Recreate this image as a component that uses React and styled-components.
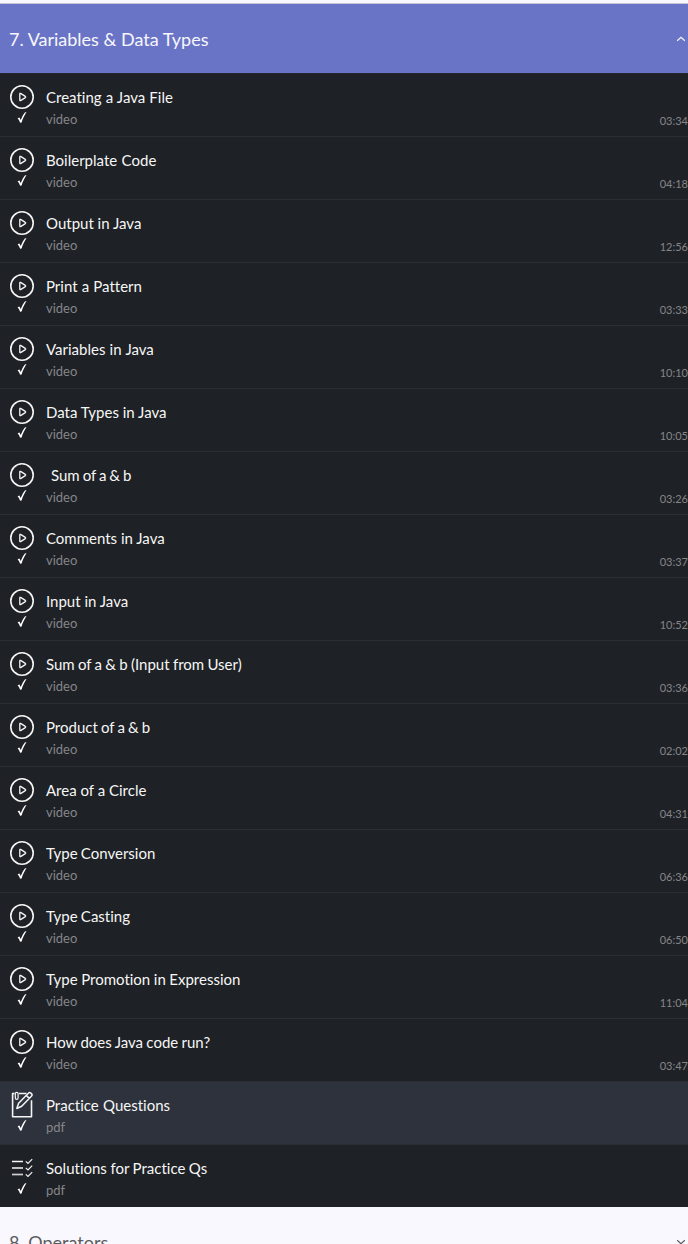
import React from "react";
import styled, { createGlobalStyle } from "styled-components";

const GlobalStyle = createGlobalStyle`
  body {
    margin: 0;
    background: #f9f8fe;
    font-family: Lato, "Open Sans", sans-serif;
    font-variant-ligatures: none;
    -webkit-font-smoothing: antialiased;
    overflow: hidden;
  }
`;

const Page = styled.main`
  box-sizing: border-box;
  height: 1244px;
  padding-top: 3px;
  overflow: hidden;
`;

const SectionHeader = styled.header`
  box-sizing: border-box;
  display: flex;
  align-items: center;
  justify-content: space-between;
  height: ${(p) => (p.$open ? 70 : 68)}px;
  padding: ${(p) => (p.$open ? 1 : 0)}px 2px 0 9px;
  border-top: 1px solid ${(p) => (p.$open ? "#c5c6d6" : "#f9f8fe")};
  background: ${(p) => (p.$open ? "#6a74c6" : "#f9f8fe")};
  color: ${(p) => (p.$open ? "#f7f7fc" : "#5c5c5e")};
`;

const SectionTitle = styled.h2`
  margin: 0;
  font-size: 18px;
  font-weight: 400;
  line-height: 24px;
  white-space: nowrap;
`;

const Chevron = styled.svg`
  display: block;
  flex: none;
  width: 10px;
  height: 6px;
  margin-bottom: ${(p) => (p.$open ? 1 : 0)}px;
  fill: none;
  stroke: currentColor;
  stroke-width: 1.2;
`;

const Lessons = styled.ul`
  margin: 0;
  padding: 0;
  list-style: none;
`;

const Lesson = styled.li`
  box-sizing: border-box;
  display: flex;
  height: 63px;
  border-top: 1px solid ${(p) => (p.$first ? "#25272f" : "#2c2e31")};
  background: ${(p) => (p.$active ? "#2e323c" : "#1e2125")};
`;

const Status = styled.div`
  display: flex;
  flex-direction: column;
  align-items: center;
  flex: none;
  width: 44px;
  padding-top: 8px;
  color: #fff;
`;

const Icon = styled.svg`
  display: block;
  width: 30px;
  height: 30px;
  fill: none;
  stroke: #f5f5f5;
`;

const Tick = styled.svg`
  display: block;
  width: 12px;
  height: 12px;
  fill: #fff;
`;

const Details = styled.div`
  flex: 1;
  padding: 12px 0 0 2px;
`;

const Name = styled.div`
  padding-left: ${(p) => (p.$indent ? 5 : 0)}px;
  color: #f6f6f6;
  font-size: 15px;
  line-height: 22px;
  white-space: nowrap;
  word-spacing: ${(p) => p.$wordSpacing || 0}px;
`;

const Kind = styled.div`
  color: #858689;
  font-size: 13px;
  line-height: 22px;
`;

const Duration = styled.time`
  align-self: flex-end;
  padding-bottom: 7px;
  color: #858689;
  font-size: 11px;
  line-height: 16px;
`;

const PlayIcon = () => (
  <Icon viewBox="0 0 30 30">
    <circle cx="15" cy="15" r="11.2" strokeWidth="1.6" />
    <path d="M12.8 11.9q0-.9.8-.5l4.7 3q.8.6 0 1.2l-4.7 3q-.8.4-.8-.5z" strokeWidth="1.3" />
  </Icon>
);

const NotesIcon = () => (
  <Icon viewBox="0 0 30 30" strokeWidth="1.6" strokeLinejoin="round">
    <path d="M7.5 3.5H5.6v23.200h18.900V10.200M12 3.500h7.500" />
    <path d="M8.300 3.200v4.500q0 1.700 1.400 1.700t1.400-1.700V3.700q0-1.300-1.400-1.300T8.300 3.500" strokeWidth="1.200" />
    <path d="M9.800 18.500l1.800-5.200L21.600 3q1-.9 2.200.1l.8.800q1 1 0 2L14.700 16.300zM19.300 5.400l3.200 3.200" strokeWidth="1.500" />
  </Icon>
);

const ChecklistIcon = () => (
  <Icon viewBox="0 0 30 30">
    <path d="M5 8.500h11M5 15h11" strokeWidth="1.600" />
    <path d="M5 21.500h11" strokeWidth="1.700" stroke="#cfcfd0" />
    <path d="M18.800 8.300l2.200 2.200 4.200-4.300M18.800 14.800l2.200 2.200 4.200-4.300M18.800 21.300l2.200 2.200 4.200-4.300" strokeWidth="1.200" />
  </Icon>
);

const icons = { video: PlayIcon, notes: NotesIcon, checklist: ChecklistIcon };

const lessons = [
  { name: "Creating a Java File", time: "03:34", wordSpacing: 0.3 },
  { name: "Boilerplate Code", time: "04:18", wordSpacing: 0.6 },
  { name: "Output in Java", time: "12:56" },
  { name: "Print a Pattern", time: "03:33", wordSpacing: 0.3 },
  { name: "Variables in Java", time: "10:10", wordSpacing: 0.4 },
  { name: "Data Types in Java", time: "10:05" },
  { name: "Sum of a & b", time: "03:26", indent: true, wordSpacing: -0.9 },
  { name: "Comments in Java", time: "03:37" },
  { name: "Input in Java", time: "10:52" },
  { name: "Sum of a & b (Input from User)", time: "03:36", wordSpacing: -0.55 },
  { name: "Product of a & b", time: "02:02", wordSpacing: -0.7 },
  { name: "Area of a Circle", time: "04:31" },
  { name: "Type Conversion", time: "06:36", wordSpacing: -0.6 },
  { name: "Type Casting", time: "06:50", wordSpacing: -0.6 },
  { name: "Type Promotion in Expression", time: "11:04", wordSpacing: -0.3 },
  { name: "How does Java code run?", time: "03:47", wordSpacing: -0.5 },
  { name: "Practice Questions", kind: "pdf", icon: "notes", active: true, wordSpacing: 0.4 },
  { name: "Solutions for Practice Qs", kind: "pdf", icon: "checklist", wordSpacing: -0.3 },
];

function LessonRow({ lesson, first }) {
  const { name, time, kind = "video", icon = "video", indent, active, wordSpacing } = lesson;
  const Glyph = icons[icon];
  return (
    <Lesson $active={active} $first={first}>
      <Status>
        <Glyph />
        <Tick viewBox="0 0 12 12">
          <path d="M1.600 6.200l1.800-.8 1.300 2.600C5.900 5 7.400 2.200 8.900.4L10.500 0C8.500 3.100 6.800 6.600 5.600 10.400l-1.500.3C3.500 8.900 2.700 7.400 1.600 6.200z" />
        </Tick>
      </Status>
      <Details>
        <Name $indent={indent} $wordSpacing={wordSpacing}>{name}</Name>
        <Kind>{kind}</Kind>
      </Details>
      {time && <Duration>{time}</Duration>}
    </Lesson>
  );
}

export default function App() {
  return (
    <Page>
      <GlobalStyle />
      <SectionHeader $open>
        <SectionTitle>7. Variables &amp; Data Types</SectionTitle>
        <Chevron $open viewBox="0 0 10 6">
          <path d="M1.200 4.700L5 1.300l3.800 3.400" />
        </Chevron>
      </SectionHeader>
      <Lessons>
        {lessons.map((lesson, i) => (
          <LessonRow key={lesson.name} lesson={lesson} first={i === 0} />
        ))}
      </Lessons>
      <SectionHeader>
        <SectionTitle>8. Operators</SectionTitle>
        <Chevron viewBox="0 0 10 6">
          <path d="M1.200 1.300L5 4.700l3.800-3.400" />
        </Chevron>
      </SectionHeader>
    </Page>
  );
}
